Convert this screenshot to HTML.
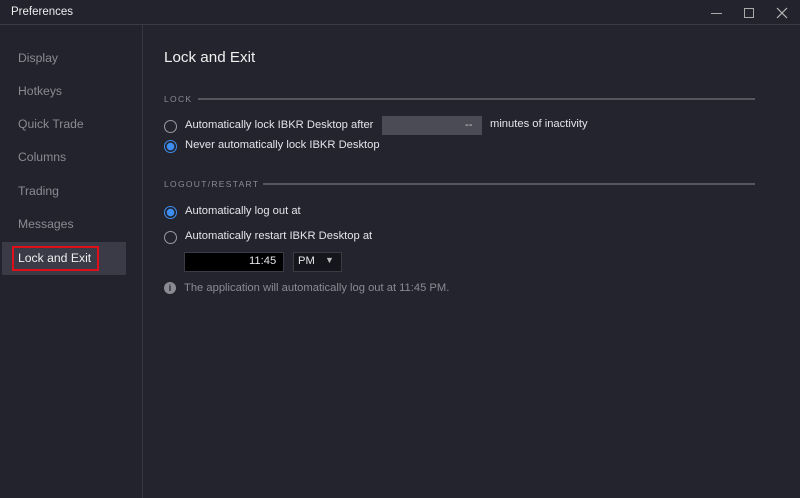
<!DOCTYPE html>
<html><head><style>
*{margin:0;padding:0;box-sizing:border-box}
body{width:800px;height:498px;background:#23242e;font-family:"Liberation Sans",sans-serif;position:relative;overflow:hidden;color:#e6e6ea}
.tb{position:absolute;left:0;top:0;width:800px;height:25px;border-bottom:1px solid #3a3b45;background:#22232c}
.tb span{position:absolute;left:11px;top:6px;font-size:11.5px;color:#eee}
.side{position:absolute;left:0;top:25px;width:143px;height:473px;border-right:1px solid #363741;background:#22232c}
.sd{position:absolute;left:18px;font-size:12.2px;color:#8a8b93}
.sel{position:absolute;left:2px;top:242px;width:124px;height:33px;background:#3a3b46}
.box{position:absolute;left:12px;top:246px;width:87px;height:25px;border:2px solid #e0101a}
.t{position:absolute;font-size:11.2px;color:#e4e4ea}
.h{position:absolute;font-size:8.5px;letter-spacing:1.3px;color:#8a8b93}
.ln{position:absolute;height:2px;background:#55565e}
.r{position:absolute;width:13px;height:13px;border-radius:50%;border:1.5px solid #9a9ba2}
.r.on{border:1.5px solid #3d8ef0;background:radial-gradient(circle,#3d8ef0 0 3.5px,#23242e 4px)}
</style></head><body>
<div class="tb"><span>Preferences</span>
<div style="position:absolute;left:711px;top:13px;width:11px;height:1px;background:#aaa"></div>
<div style="position:absolute;left:744px;top:8px;width:10px;height:10px;border:1px solid #aaa"></div>
<svg style="position:absolute;left:776px;top:7px" width="12" height="12"><path d="M1 1L11 11M11 1L1 11" stroke="#bbb" stroke-width="1.2"/></svg>
</div>
<div class="side"></div>
<div class="sd" style="top:51px">Display</div>
<div class="sd" style="top:84px">Hotkeys</div>
<div class="sd" style="top:117px">Quick Trade</div>
<div class="sd" style="top:150px">Columns</div>
<div class="sd" style="top:184px">Trading</div>
<div class="sd" style="top:217px">Messages</div>
<div class="sel"></div>
<div class="box"></div>
<div class="sd" style="top:251px;color:#f0f0f0">Lock and Exit</div>
<div class="t" style="left:164px;top:49px;font-size:15.2px;color:#f0f0f0">Lock and Exit</div>
<div class="h" style="left:164px;top:94px">LOCK</div>
<div class="ln" style="left:198px;top:98px;width:557px"></div>
<div class="r" style="left:164px;top:120px"></div>
<div class="t" style="left:185px;top:119px">Automatically lock IBKR Desktop after</div>
<div style="position:absolute;left:382px;top:116px;width:100px;height:19px;background:#4a4b55"></div>
<div class="t" style="left:465px;top:119px;color:#ccc">--</div>
<div class="t" style="left:490px;top:118px">minutes of inactivity</div>
<div class="r on" style="left:164px;top:140px"></div>
<div class="t" style="left:185px;top:139px">Never automatically lock IBKR Desktop</div>
<div class="h" style="left:164px;top:179px">LOGOUT/RESTART</div>
<div class="ln" style="left:263px;top:183px;width:492px"></div>
<div class="r on" style="left:164px;top:206px"></div>
<div class="t" style="left:185px;top:205px">Automatically log out at</div>
<div class="r" style="left:164px;top:231px"></div>
<div class="t" style="left:185px;top:230px">Automatically restart IBKR Desktop at</div>
<div style="position:absolute;left:184px;top:252px;width:100px;height:20px;background:#000;border:1px solid #3a3b45"></div>
<div class="t" style="left:249px;top:255px">11:45</div>
<div style="position:absolute;left:293px;top:252px;width:49px;height:20px;background:#15161c;border:1px solid #3a3b45"></div>
<div class="t" style="left:298px;top:255px">PM</div>
<div class="t" style="left:325px;top:255px;font-size:9px;color:#bbb">▼</div>
<div style="position:absolute;left:164px;top:282px;width:12px;height:12px;border-radius:50%;background:#8a8b93;color:#23242e;font-size:9px;font-weight:bold;text-align:center;line-height:12px">i</div>
<div class="t" style="left:184px;top:282px;color:#8a8b93">The application will automatically log out at 11:45 PM.</div>
</body></html>
